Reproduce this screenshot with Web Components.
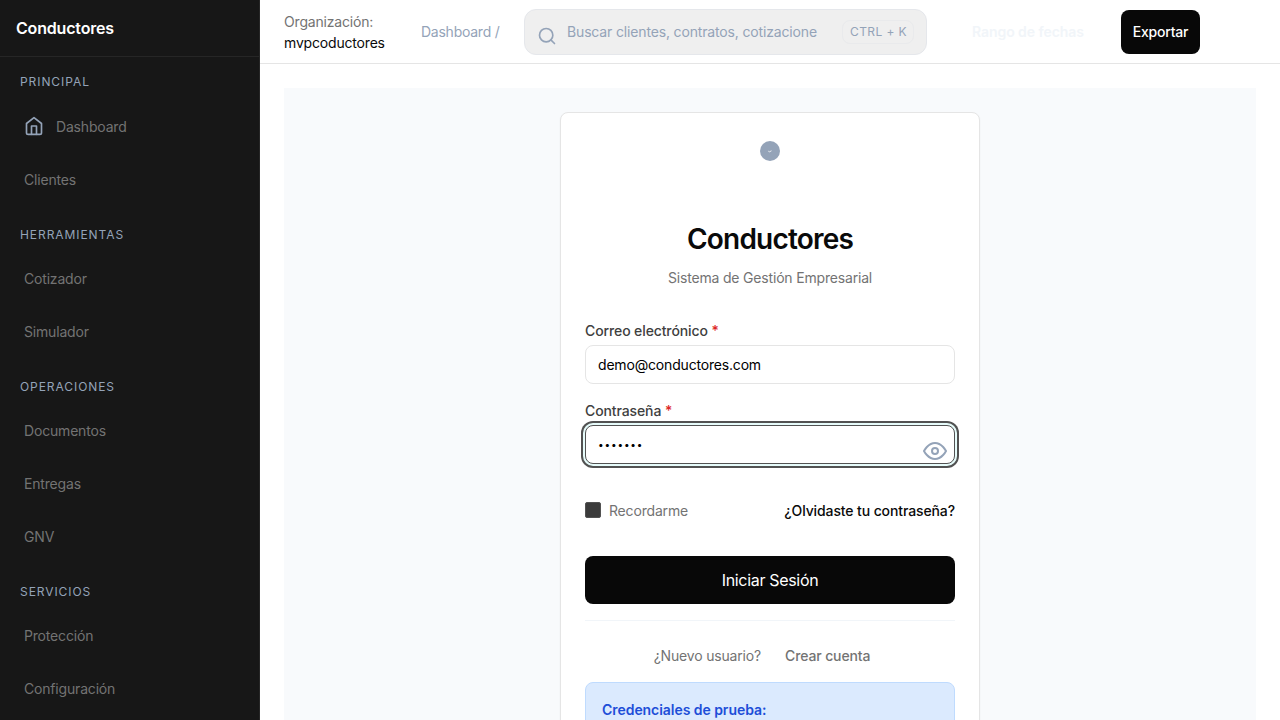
<!DOCTYPE html>
<html lang="es">
<head>
<meta charset="utf-8">
<title>Conductores</title>
<style>
html,body{margin:0;height:100%;overflow:hidden}
body{font-family:Inter,sans-serif;font-size:14px;line-height:21px;letter-spacing:-.18px;background:#fff;color:#0a0a0a}
</style>
</head>
<body>
<app-shell></app-shell>
<script>
const define = (name, html) => customElements.define(name, class extends HTMLElement {
  constructor() {
    super();
    const t = document.createElement('template');
    t.innerHTML = html;
    this.attachShadow({ mode: 'open' }).append(t.content.cloneNode(true));
  }
});

define('nav-item', `<style>
:host{display:flex;align-items:center;gap:12px;height:49px;padding:0 24px;color:#737373}
::slotted(svg){flex:none;color:#94a3b8}
</style><slot name="icon"></slot><slot></slot>`);

define('nav-section', `<style>
:host{display:block}
h2{margin:0 0 10.4px;padding:0 20px;height:18px;font-size:12px;line-height:18px;font-weight:400;letter-spacing:.93px;text-transform:uppercase;color:#94a3b8}
div{display:flex;flex-direction:column;gap:4px}
</style><h2><slot name="title"></slot></h2><div><slot></slot></div>`);

define('side-bar', `<style>
:host{display:block;box-sizing:border-box;width:260px;height:720px;background:#171717;border-right:1px solid #262626;overflow:hidden}
header{height:56px;display:flex;align-items:center;padding:0 16px;border-bottom:1px solid #262626;font-size:16px;font-weight:600;color:#fff}
nav{display:flex;flex-direction:column;gap:21.8px;padding-top:16.45px}
</style>
<header>Conductores</header>
<nav>
<nav-section><span slot="title">Principal</span>
<nav-item><svg slot="icon" width="20" height="20" viewBox="0 0 24 24" fill="none" stroke="currentColor" stroke-width="2" stroke-linecap="round" stroke-linejoin="round"><path d="M3 9l9-7 9 7v11a2 2 0 0 1-2 2H5a2 2 0 0 1-2-2z"/><path d="M9 22V12h6v10"/></svg>Dashboard</nav-item>
<nav-item>Clientes</nav-item></nav-section>
<nav-section><span slot="title">Herramientas</span><nav-item>Cotizador</nav-item><nav-item>Simulador</nav-item></nav-section>
<nav-section><span slot="title">Operaciones</span><nav-item>Documentos</nav-item><nav-item>Entregas</nav-item><nav-item>GNV</nav-item></nav-section>
<nav-section><span slot="title">Servicios</span><nav-item>Protección</nav-item><nav-item>Configuración</nav-item></nav-section>
</nav>`);

define('search-box', `<style>
:host{display:flex;align-items:center;box-sizing:border-box;width:403px;height:46px;padding:0 12px;border:1px solid #e5e7eb;border-radius:12px;background:#efefef;color:#94a3b8}
svg{flex:none;margin:8px 10px 0 0}
span{flex:1;white-space:nowrap;overflow:hidden;letter-spacing:-.155px}
kbd{box-sizing:border-box;height:24px;padding:0 6px 0 7px;border:1px solid #e9eaec;border-radius:8px;font:12px/22px Inter,sans-serif;letter-spacing:.4px}
</style>
<svg width="20" height="20" viewBox="0 0 24 24" fill="none" stroke="currentColor" stroke-width="2" stroke-linecap="round"><circle cx="11" cy="11" r="8"/><path d="m21 21-4.350-4.350"/></svg>
<span>Buscar clientes, contratos, cotizacione</span><kbd>CTRL + K</kbd>`);

define('top-bar', `<style>
:host{display:flex;align-items:center;box-sizing:border-box;height:64px;padding:0 24px;border-bottom:1px solid #e5e5e5}
.org{width:137px;color:#737373}.org b{display:block;font-weight:400;color:#0a0a0a}
.crumb{width:103px;color:#94a3b8;letter-spacing:-.25px}
.range{margin-left:45px;width:149px;font-weight:600;letter-spacing:-.07px;color:#f1f5f9}
button{width:79px;height:44px;padding:0;border:0;border-radius:8px;background:#080808;color:#fff;font:500 14px/21px Inter,sans-serif;letter-spacing:-.2px}
</style>
<div class="org">Organización: <b>mvpcoductores</b></div>
<div class="crumb">Dashboard /</div><search-box></search-box>
<div class="range">Rango de fechas</div><button>Exportar</button>`);

define('form-field', `<style>
:host{display:block}
label{display:block;height:21px;font-weight:500;letter-spacing:-.11px;color:#404040;margin-bottom:4px}
i{font-style:normal;color:#dc2626}
.box{box-sizing:border-box;height:39px;display:flex;align-items:center;padding:0 12px;border:1px solid #e5e5e5;border-radius:8px;background:#fff;color:#000}
:host([focused]) .box{border-color:#525252;box-shadow:0 0 0 2px #e6fbfa,0 0 0 4px #525252}
::slotted(svg){margin:12px -5px 0 auto;color:#94a3b8}
::slotted(.mask){font-size:10px;letter-spacing:.85px}
</style><label><slot name="label"></slot> <i>*</i></label><div class="box"><slot></slot></div>`);

define('login-card', `<style>
:host{display:block;box-sizing:border-box;width:420px;height:760px;padding:28px 24px;border:1px solid #e5e5e5;border-radius:8px;background:#fff;box-shadow:0 1px 2px rgba(0,0,0,.05)}
.logo{width:20px;height:20px;margin:0 auto;border-radius:50%;background:#94a3b8;display:grid;place-items:center}
h1{margin:57px 0 0;font-size:28px;line-height:42px;font-weight:600;letter-spacing:-.8px;text-align:center}
.sub{margin:7px 0 32px;text-align:center;color:#737373}
form-field{margin-bottom:16px}
.row{display:flex;align-items:center;margin-top:36px;color:#737373}
.check{width:14px;height:14px;margin:-2px 8px 0 0;border:1px solid #525252;border-radius:2px;background:#3b3b3b}
.row a{margin-left:auto;font-weight:500;letter-spacing:-.11px;color:#0a0a0a}
.go{display:block;width:100%;height:48px;margin-top:35px;border:0;border-radius:8px;background:#080808;color:#fff;font:400 16px/24px Inter,sans-serif;letter-spacing:-.32px}
.new{display:flex;gap:24px;justify-content:center;margin-top:16px;padding:24px 16px 0 0;border-top:1px solid #f1f5f9;color:#737373}
.new b{font-weight:500;letter-spacing:-.12px}
.demo{margin-top:16px;height:110px;padding:16px;border:1px solid #bfdbfe;border-radius:8px;background:#dbeafe;color:#1d4ed8;font-weight:600;letter-spacing:-.05px}
</style>
<div class="logo"><svg width="4" height="3" viewBox="0 0 4 3"><path d="M.3 1.200 1.500 1.800 3.500.8" fill="none" stroke="#fff" stroke-width=".8"/></svg></div>
<h1>Conductores</h1><div class="sub">Sistema de Gestión Empresarial</div>
<form-field><span slot="label">Correo electrónico</span>demo@conductores.com</form-field>
<form-field focused><span slot="label">Contraseña</span><span class="mask">•••••••</span><svg width="24" height="24" viewBox="0 0 24 24" fill="none" stroke="currentColor" stroke-width="2"><path d="M1 12s4-8 11-8 11 8 11 8-4 8-11 8S1 12 1 12z"/><circle cx="12" cy="12" r="3"/></svg></form-field>
<div class="row"><span class="check"></span>Recordarme<a>¿Olvidaste tu contraseña?</a></div>
<button class="go">Iniciar Sesión</button>
<div class="new"><span>¿Nuevo usuario?</span><b>Crear cuenta</b></div>
<div class="demo">Credenciales de prueba:</div>`);

define('app-shell', `<style>
:host{display:grid;grid-template-columns:260px 1fr;height:720px;overflow:hidden}
main{margin:24px 24px 0;height:632px;overflow:hidden;display:flex;justify-content:center;align-items:flex-start;padding-top:24px;box-sizing:border-box;background:#f8fafc}
</style><side-bar></side-bar><div><top-bar></top-bar><main><login-card></login-card></main></div>`);
</script>
</body>
</html>
